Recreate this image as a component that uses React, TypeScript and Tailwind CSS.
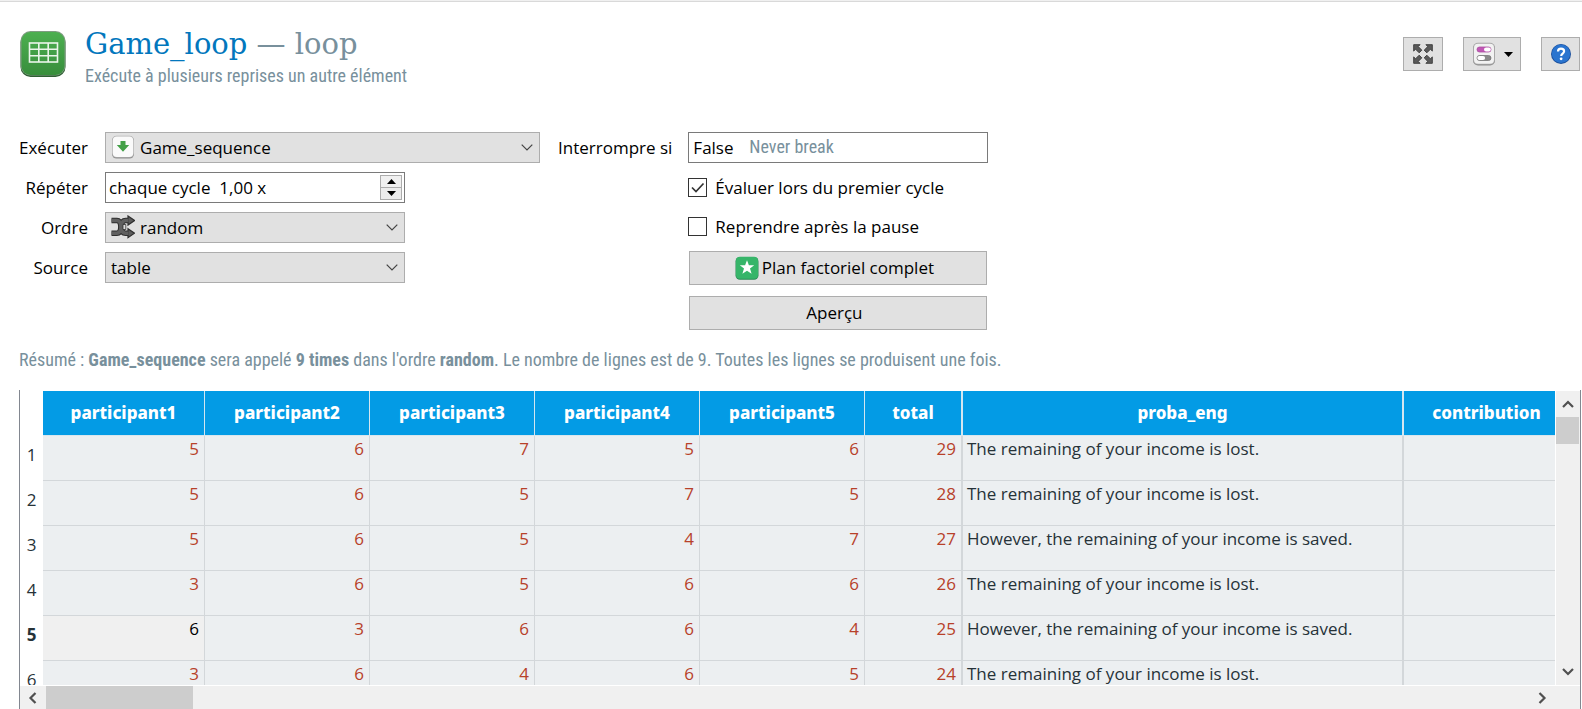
import { useState } from "react";
import type { ReactNode } from "react";

const UI = "font-['Open_Sans','Noto_Sans',sans-serif]";
const CONDENSED = "font-['Roboto_Condensed','Roboto',sans-serif]";
const SLAB = "font-['Roboto_Slab','DejaVu_Serif',serif]";

type Row = { values: number[]; text: string };

const LOST = "The remaining of your income is lost.";
const SAVED = "However, the remaining of your income is saved.";

const rows: Row[] = [
  { values: [5, 6, 7, 5, 6, 29], text: LOST },
  { values: [5, 6, 5, 7, 5, 28], text: LOST },
  { values: [5, 6, 5, 4, 7, 27], text: SAVED },
  { values: [3, 6, 5, 6, 6, 26], text: LOST },
  { values: [6, 3, 6, 6, 4, 25], text: SAVED },
  { values: [3, 6, 4, 6, 5, 24], text: LOST },
];

const CURRENT_ROW = 4;

const headers = [
  "participant1",
  "participant2",
  "participant3",
  "participant4",
  "participant5",
  "total",
  "proba_eng",
  "contribution",
];

function LoopIcon() {
  return (
    <svg className="size-12 shrink-0" viewBox="0 0 48 48" aria-hidden="true">
      <defs>
        <linearGradient id="loopFill" x1="0" y1="0" x2="0" y2="1">
          <stop offset="0" stopColor="#4caf50" />
          <stop offset="1" stopColor="#388e3c" />
        </linearGradient>
      </defs>
      <rect x="1.5" y="2.5" width="45" height="44.500" rx="10" fill="#2f5f33" />
      <rect x="1.500" y="1" width="45" height="44.500" rx="10" fill="#7f9c81" />
      <rect x="2.500" y="2" width="43" height="43" rx="9" fill="url(#loopFill)" />
      <g fill="none" stroke="#eaf5ea" strokeWidth="1.600">
        <rect x="10.500" y="13" width="28" height="19" />
        <path d="M10.500 19.300h28M10.500 25.700h28M19.800 13v19M29.200 13v19" />
      </g>
    </svg>
  );
}

function ExpandIcon() {
  const arrow = "M0.800 0.800h7.700L6.300 3.100l4.300 4.300-3.200 3.200-4.300-4.300L0.800 8.500z";
  return (
    <svg className="size-5" viewBox="0 0 24 24" aria-hidden="true" fill="#5a5a5a" stroke="#333" strokeWidth="1">
      <path d={arrow} />
      <path d={arrow} transform="matrix(-1 0 0 1 24 0)" />
      <path d={arrow} transform="matrix(1 0 0 -1 0 24)" />
      <path d={arrow} transform="matrix(-1 0 0 -1 24 24)" />
    </svg>
  );
}

function TogglesIcon() {
  return (
    <svg className="size-6" viewBox="0 0 24 24" aria-hidden="true">
      <rect x="1" y="1.500" width="22" height="22" rx="5" fill="#8d8d8d" />
      <rect x="1" y="0.800" width="22" height="21.800" rx="5" fill="#a9a9a9" />
      <rect x="2" y="1.800" width="20" height="20" rx="4" fill="#f2f2f2" />
      <rect x="5" y="5" width="14" height="5" rx="2.500" fill="#c158b6" stroke="#a94fa0" strokeWidth="0.800" />
      <rect x="12" y="5.400" width="6.800" height="4.200" rx="2.100" fill="#fff" />
      <rect x="5" y="13.500" width="14" height="5" rx="2.500" fill="#8a8a8a" stroke="#777" strokeWidth="0.800" />
      <rect x="5.300" y="13.900" width="7.800" height="4.200" rx="2.100" fill="#fff" />
    </svg>
  );
}

function HelpIcon() {
  return (
    <svg className="size-5" viewBox="0 0 20 20" aria-hidden="true">
      <circle cx="10" cy="10" r="10" fill="#1b4f9c" />
      <circle cx="10" cy="9.700" r="9.200" fill="#2a74cf" />
      <path
        d="M7 7.400C7 5.500 8.300 4.700 10 4.700s3.100 1 3.100 2.600c0 2.200-2.900 2.300-2.900 4.600"
        fill="none"
        stroke="#fff"
        strokeWidth="2.200"
      />
      <circle cx="10.100" cy="14.800" r="1.400" fill="#fff" />
    </svg>
  );
}

function SequenceIcon() {
  return (
    <svg className="h-6 w-6" viewBox="0 0 24 24" aria-hidden="true">
      <rect x="1" y="1.500" width="22" height="22" rx="4.500" fill="#8f8f8f" />
      <rect x="1" y="0.800" width="22" height="21.800" rx="4.500" fill="#b4b4b4" />
      <rect x="1.800" y="1.500" width="20.400" height="20.600" rx="4" fill="#fafafa" />
      <path d="M9.500 6h5v4h3.700L12 16.800 5.800 10h3.700z" fill="#43a047" />
    </svg>
  );
}

function ShuffleIcon() {
  const upper = "M0.500 18.200H6c2.200 0 3.600-2 4-6.200s1.800-6.500 4.500-6.500h3";
  const lower = "M0.500 5.500H6c2.200 0 3.600 2.200 4 6.500s1.800 6.200 4.500 6.200h3";
  const heads = "M17 1l6.500 4.500L17 10zM17 13.700l6.500 4.500-6.500 4.500z";
  return (
    <svg className="h-6 w-6" viewBox="0 0 24 24" aria-hidden="true">
      <g fill="none" stroke="#2f2f2f" strokeWidth="5.600">
        <path d={upper} />
        <path d={lower} />
      </g>
      <path d={heads} fill="#5c5c5c" stroke="#2f2f2f" strokeWidth="1.200" />
      <g fill="none" stroke="#606060" strokeWidth="3.400">
        <path d={upper} />
        <path d={lower} />
      </g>
      <path d="M12 9.500h2.800v5H12z" fill="#dcdcdc" stroke="#2f2f2f" strokeWidth="0.800" />
    </svg>
  );
}

function StarIcon() {
  return (
    <svg className="size-6" viewBox="0 0 24 24" aria-hidden="true">
      <rect x="0.500" y="1" width="23" height="22.800" rx="4.500" fill="#2b8a56" />
      <rect x="1" y="0.800" width="22" height="22" rx="4" fill="#36b569" />
      <path d="M12 4.300l1.900 5h5.300l-4.200 3.300 1.600 5.200-4.600-3.100-4.600 3.100L9 12.600 4.800 9.300h5.300z" fill="#fff" />
    </svg>
  );
}

function Triangle({ up = false }: { up?: boolean }) {
  return (
    <svg className="h-[5px] w-[9px]" viewBox="0 0 9 5" aria-hidden="true">
      <path d={up ? "M4.500 0L9 5H0z" : "M0 0h9L4.500 5z"} fill="#000" />
    </svg>
  );
}

const scrollPaths = {
  up: "M2 10l5-5 5 5",
  down: "M2 4l5 5 5-5",
  left: "M9.500 2l-5 5 5 5",
  right: "M4.500 2l5 5-5 5",
};

function ScrollArrow({ dir, className }: { dir: keyof typeof scrollPaths; className: string }) {
  return (
    <button type="button" aria-label={dir} className={`flex shrink-0 items-center justify-center ${className}`}>
      <svg className="size-[14px]" viewBox="0 0 14 14" fill="none" stroke="#505050" strokeWidth="2.200" aria-hidden="true">
        <path d={scrollPaths[dir]} />
      </svg>
    </button>
  );
}

function ToolButton({ label, className, children }: { label: string; className: string; children: ReactNode }) {
  return (
    <button
      type="button"
      aria-label={label}
      className={`flex h-[34px] items-center justify-center gap-2 border border-[#adadad] bg-[#e1e1e1] ${className}`}
    >
      {children}
    </button>
  );
}

function SelectBox({
  id,
  icon,
  options,
  className,
}: {
  id: string;
  icon?: ReactNode;
  options: string[];
  className: string;
}) {
  return (
    <div className={`relative h-[31px] ${className}`}>
      <select
        id={id}
        className={`h-full w-full appearance-none border border-[#adadad] bg-[#e1e1e1] pr-8 ${icon ? "pl-[34px]" : "pl-[5px]"}`}
      >
        {options.map((o) => (
          <option key={o}>{o}</option>
        ))}
      </select>
      {icon && <span className="pointer-events-none absolute top-[3px] left-[6px]">{icon}</span>}
      <svg
        className="pointer-events-none absolute top-3 right-[7px] h-[7px] w-3"
        viewBox="0 0 12 7"
        fill="none"
        stroke="#444"
        strokeWidth="1.200"
        aria-hidden="true"
      >
        <path d="M0.700 0.700L6 6l5.300-5.300" />
      </svg>
    </div>
  );
}

function CheckRow({ label, initial }: { label: string; initial: boolean }) {
  const [checked, setChecked] = useState(initial);
  return (
    <label className="flex h-[31px] items-center gap-2">
      <span className="relative flex size-[19px]">
        <input
          type="checkbox"
          checked={checked}
          onChange={(e) => setChecked(e.target.checked)}
          className="size-[19px] appearance-none border border-[#333] bg-white"
        />
        {checked && (
          <svg
            className="pointer-events-none absolute inset-0 size-[19px]"
            viewBox="0 0 19 19"
            fill="none"
            stroke="#333"
            strokeWidth="1.700"
            aria-hidden="true"
          >
            <path d="M4 9.500l4 4 7.500-8" />
          </svg>
        )}
      </span>
      {label}
    </label>
  );
}

function PushButton({ children }: { children: ReactNode }) {
  return (
    <button
      type="button"
      className="mx-px flex h-[34px] items-center justify-center gap-[3px] border border-[#adadad] bg-[#e1e1e1] pr-2"
    >
      {children}
    </button>
  );
}

function columnBorder(i: number) {
  return i === 5 || i === 6 ? "border-r-2" : "border-r";
}

function LoopTable() {
  return (
    <table className="w-[1550px] table-fixed border-separate border-spacing-0">
      <colgroup>
        <col className="w-[23px]" />
        <col className="w-[162px]" />
        <col className="w-[165px]" />
        <col className="w-[165px]" />
        <col className="w-[165px]" />
        <col className="w-[165px]" />
        <col className="w-[98px]" />
        <col className="w-[441px]" />
        <col className="w-[166px]" />
      </colgroup>
      <thead className="font-['Noto_Sans',sans-serif]">
        <tr className="h-[45px]">
          <td />
          {headers.map((h, i) => (
            <th
              key={h}
              scope="col"
              className={`border-b border-b-[#d8e6ee] border-r-[#d4e6f0] bg-[#039be5] text-[17px] font-extrabold text-white ${columnBorder(i)}`}
            >
              {h}
            </th>
          ))}
        </tr>
      </thead>
      <tbody className="text-[#263238]">
        {rows.map((row, r) => (
          <tr key={r} className="h-[45px]">
            <th
              scope="row"
              className={`pb-[7px] text-center align-middle ${r === CURRENT_ROW ? "font-bold" : "font-normal"}`}
            >
              {r + 1}
            </th>
            {row.values.map((v, i) => {
              const current = r === CURRENT_ROW && i === 0;
              return (
                <td
                  key={i}
                  className={`border-b border-[#d3d7da] pt-px pr-[5px] text-right align-top ${columnBorder(i)} ${
                    current ? "bg-[#f0f0f0] text-black" : "bg-[#eceff1] text-[#b7412a]"
                  }`}
                >
                  {v}
                </td>
              );
            })}
            <td className="border-r-2 border-b border-[#d3d7da] bg-[#eceff1] pt-px pl-1 align-top whitespace-nowrap">
              {row.text}
            </td>
            <td className="border-r border-b border-[#d3d7da] bg-[#eceff1]" />
          </tr>
        ))}
      </tbody>
    </table>
  );
}

export default function App() {
  return (
    <div className={`flex h-screen flex-col overflow-hidden bg-white text-[17px] leading-6 text-black ${UI}`}>
      <div className="h-[2px] shrink-0 border-b border-[#d9d9d9] bg-[#f0f0f0]" />

      <header className="flex shrink-0 items-start justify-between pt-[26px] pr-[2px] pl-[19px]">
        <div className="flex gap-[18px]">
          <div className="pt-[2px]">
            <LoopIcon />
          </div>
          <div>
            <h1 className={`text-[29px] leading-8 text-[#0277bd] ${SLAB}`}>
              Game_loop <span className="text-[#78909c]">— loop</span>
            </h1>
            <p className={`text-[18px] leading-8 text-[#78909c] ${CONDENSED}`}>
              Exécute à plusieurs reprises un autre élément
            </p>
          </div>
        </div>
        <div className="flex gap-5 pt-[9px]">
          <ToolButton label="Plein écran" className="w-10">
            <ExpandIcon />
          </ToolButton>
          <ToolButton label="Affichage" className="w-[58px]">
            <TogglesIcon />
            <Triangle />
          </ToolButton>
          <ToolButton label="Aide" className="w-[39px]">
            <HelpIcon />
          </ToolButton>
        </div>
      </header>

      <form className="flex shrink-0 items-start gap-[18px] pt-10 pl-[19px]">
        <div className="grid grid-cols-[auto_435px] items-center gap-x-[17px] gap-y-[9px]">
          <label htmlFor="run" className="text-right">
            Exécuter
          </label>
          <SelectBox id="run" options={["Game_sequence"]} icon={<SequenceIcon />} className="w-full" />

          <label htmlFor="repeat" className="text-right">
            Répéter
          </label>
          <div className="flex h-[31px] w-[300px] border border-[#7a7a7a] bg-white p-[2px]">
            <input
              id="repeat"
              type="text"
              defaultValue={"chaque cycle  1,00 x"}
              className="min-w-0 flex-1 bg-transparent pl-px whitespace-pre outline-none"
            />
            <div className="flex w-[22px] flex-col">
              <button
                type="button"
                aria-label="Augmenter"
                className="flex flex-1 items-center justify-center border border-[#acacac] bg-[#f0f0f0]"
              >
                <Triangle up />
              </button>
              <button
                type="button"
                aria-label="Diminuer"
                className="flex flex-1 items-center justify-center border border-t-0 border-[#acacac] bg-[#ececec]"
              >
                <Triangle />
              </button>
            </div>
          </div>

          <label htmlFor="order" className="text-right">
            Ordre
          </label>
          <SelectBox id="order" options={["random", "sequential"]} icon={<ShuffleIcon />} className="w-[300px]" />

          <label htmlFor="source" className="text-right">
            Source
          </label>
          <SelectBox id="source" options={["table", "file"]} className="w-[300px]" />
        </div>

        <div className="grid grid-cols-[auto_300px] gap-x-4">
          <label htmlFor="break" className="flex h-[31px] items-center">
            Interrompre si
          </label>
          <div className="relative h-[31px]">
            <input
              id="break"
              type="text"
              defaultValue="False"
              className="h-full w-full border border-[#7a7a7a] bg-white px-1 outline-none"
            />
            <span
              className={`pointer-events-none absolute top-[3px] left-[61px] text-[18px] text-[#78909c] ${CONDENSED}`}
            >
              Never break
            </span>
          </div>
          <div className="col-start-2 flex flex-col pt-[9px]">
            <CheckRow label="Évaluer lors du premier cycle" initial />
            <div className="pt-2">
              <CheckRow label="Reprendre après la pause" initial={false} />
            </div>
            <div className="flex flex-col gap-[11px] pt-[9px]">
              <PushButton>
                <StarIcon />
                Plan factoriel complet
              </PushButton>
              <PushButton>Aperçu</PushButton>
            </div>
          </div>
        </div>
      </form>

      <p className={`shrink-0 pt-[18px] pl-[19px] text-[18px] leading-6 text-[#78909c] ${CONDENSED}`}>
        Résumé : <b>Game_sequence</b> sera appelé <b>9 times</b> dans l'ordre <b>random</b>. Le nombre de lignes est de
        9. Toutes les lignes se produisent une fois.
      </p>

      <section className="mt-[18px] mr-px ml-[19px] flex min-h-0 flex-1 flex-col border-x border-[#828790]">
        <div className="flex min-h-0 flex-1 pt-px">
          <div className="min-w-0 flex-1 overflow-hidden">
            <LoopTable />
          </div>
          <div className="ml-px flex w-6 shrink-0 flex-col bg-[#f0f0f0] pr-px">
            <ScrollArrow dir="up" className="h-[26px]" />
            <div className="h-[27px] bg-[#cdcdcd]" />
            <div className="flex-1" />
            <ScrollArrow dir="down" className="h-[26px]" />
          </div>
        </div>
        <div className="mt-px flex h-[23px] shrink-0 bg-[#f0f0f0] pr-[25px]">
          <ScrollArrow dir="left" className="w-[26px]" />
          <div className="w-[147px] bg-[#cdcdcd]" />
          <div className="flex-1" />
          <ScrollArrow dir="right" className="w-[26px]" />
        </div>
      </section>
    </div>
  );
}
